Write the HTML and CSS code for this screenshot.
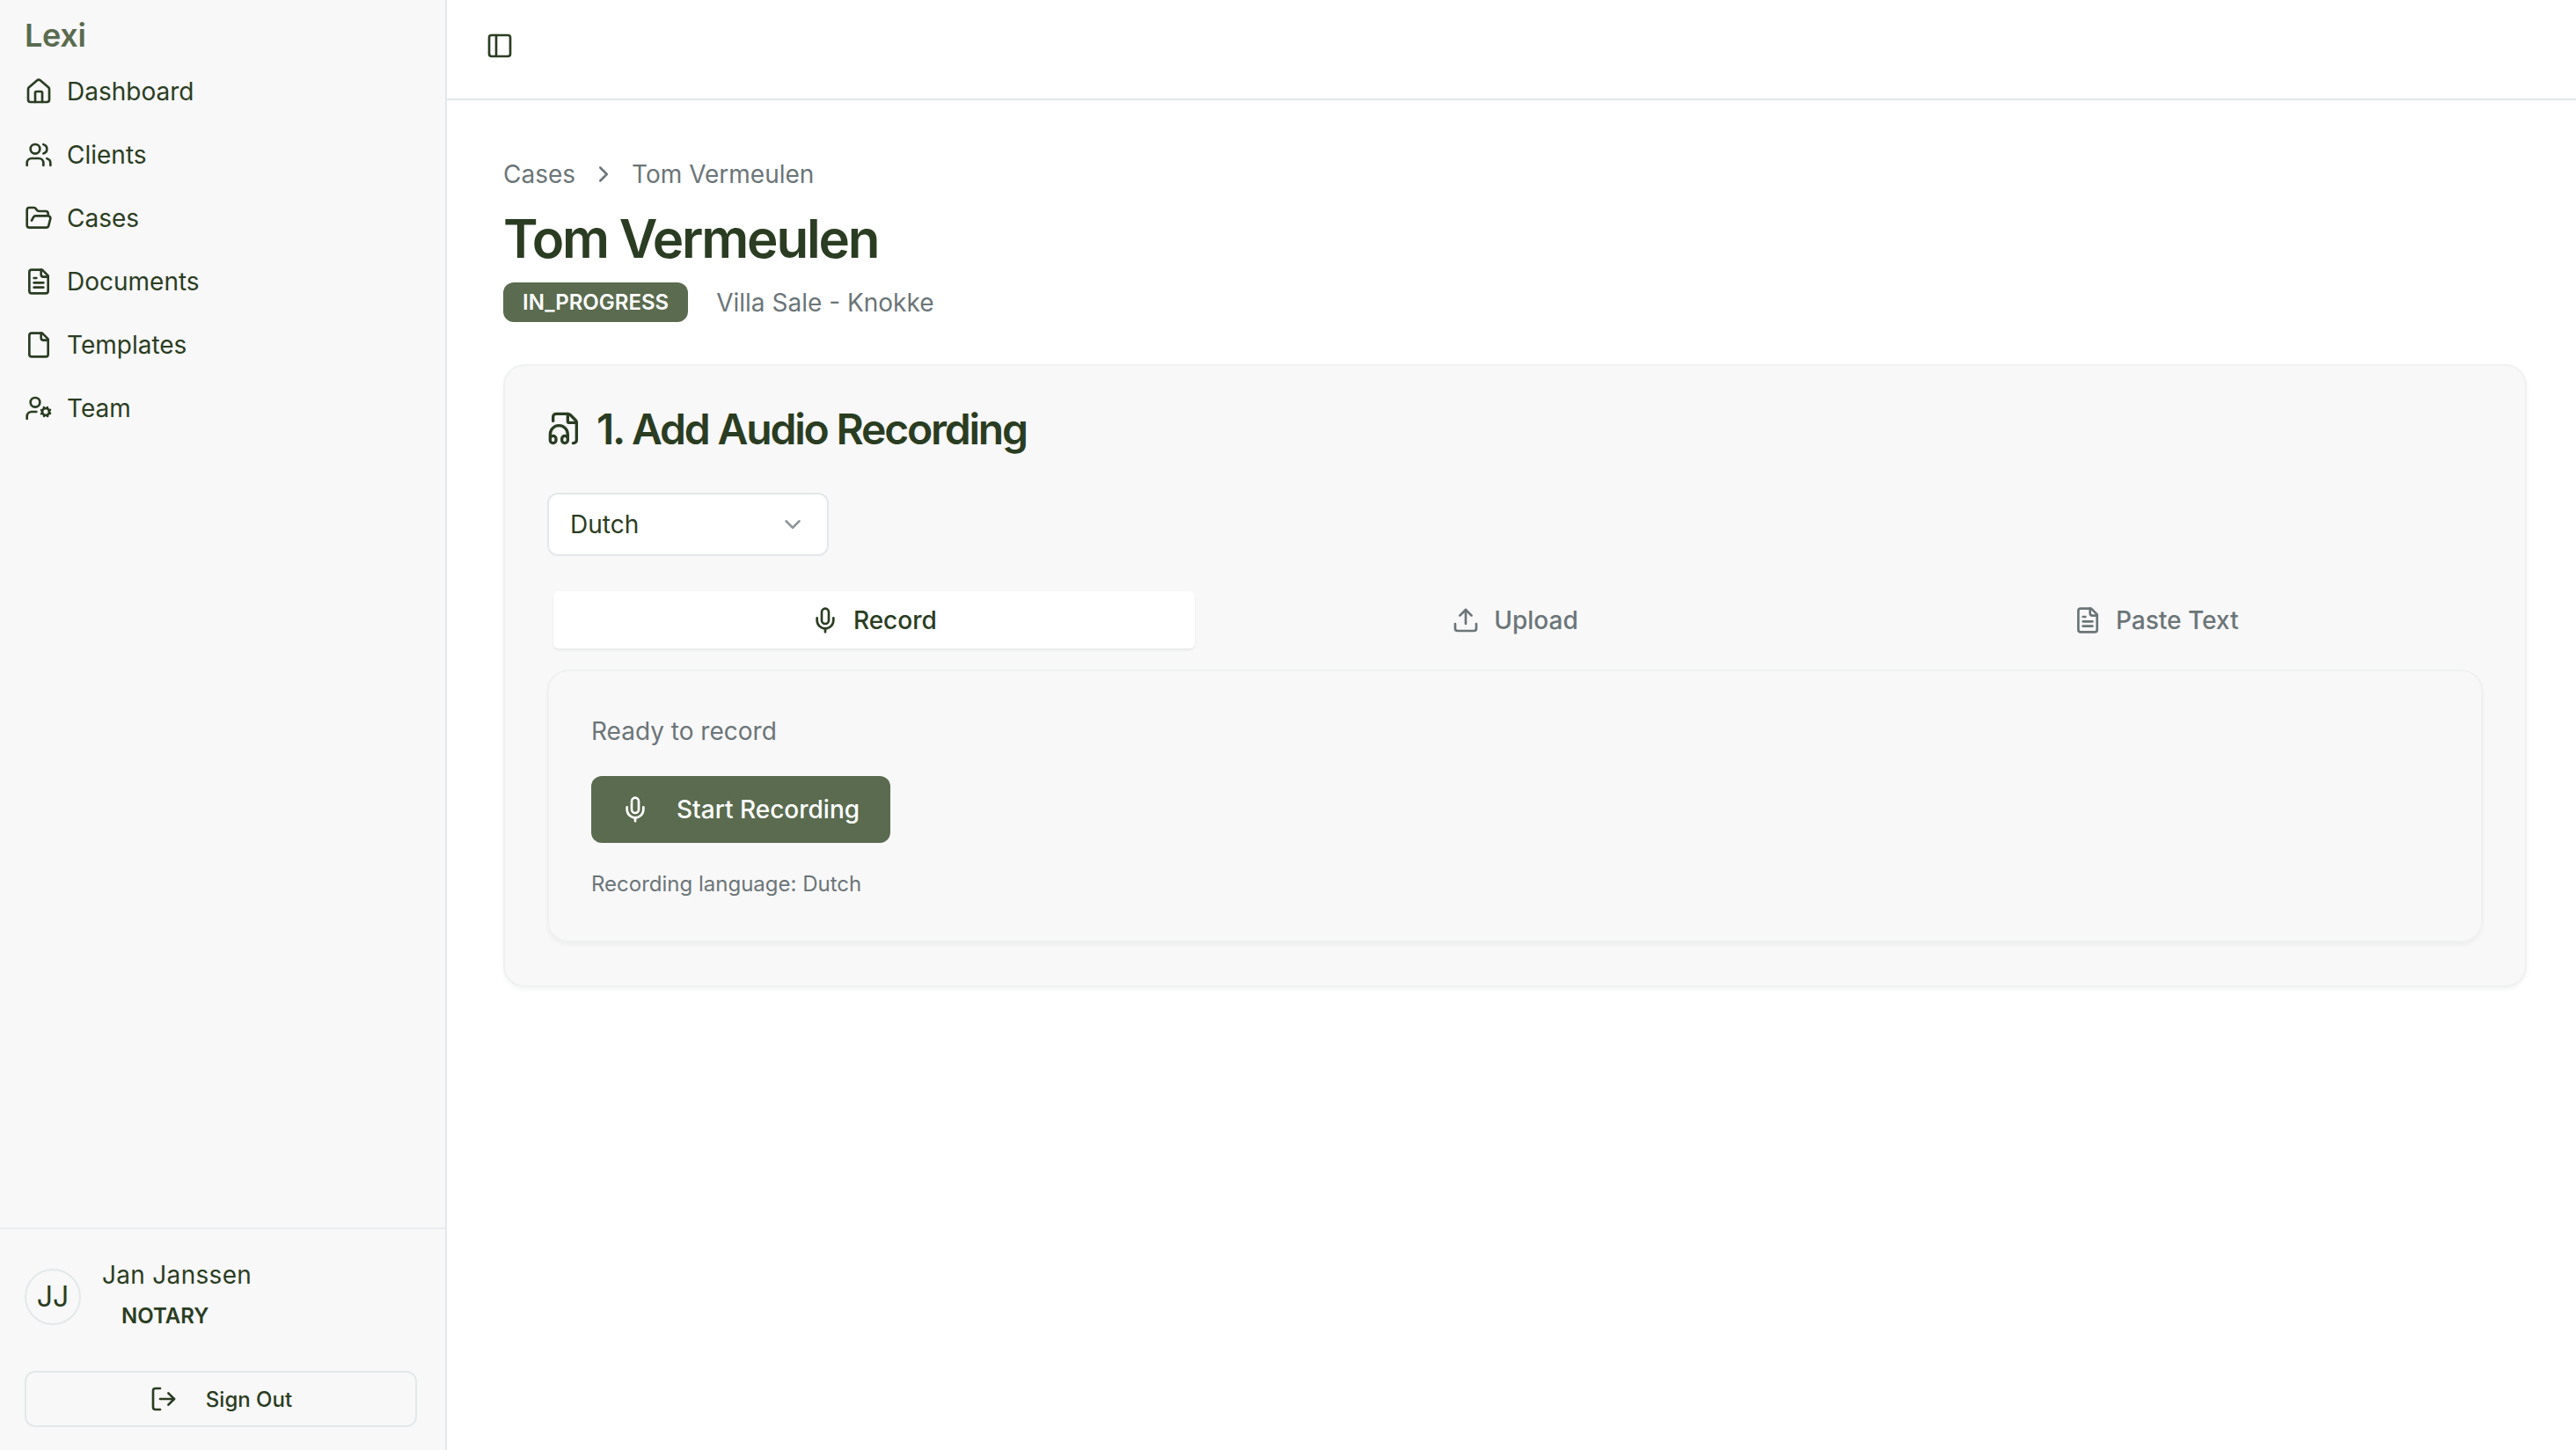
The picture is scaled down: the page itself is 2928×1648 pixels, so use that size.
FILE: index.html
```html
<!DOCTYPE html>
<html>
<head>
	<title>Lexi</title>
	<link rel="stylesheet" href="styles.css">
</head>
<body>
	<div class="app">
		<aside class="sidebar">
			<div class="brand">Lexi</div>
			<nav class="nav">
				<a class="nav-item"><svg class="icon" viewBox="0 0 24 24"><path d="M15 21v-8a1 1 0 0 0-1-1h-4a1 1 0 0 0-1 1v8"/><path d="M3 10a2 2 0 0 1 .709-1.528l7-5.999a2 2 0 0 1 2.582 0l7 5.999A2 2 0 0 1 21 10v9a2 2 0 0 1-2 2H5a2 2 0 0 1-2-2z"/></svg>Dashboard</a>
				<a class="nav-item"><svg class="icon" viewBox="0 0 24 24"><path d="M16 21v-2a4 4 0 0 0-4-4H6a4 4 0 0 0-4 4v2"/><circle cx="9" cy="7" r="4"/><path d="M22 21v-2a4 4 0 0 0-3-3.87"/><path d="M16 3.13a4 4 0 0 1 0 7.75"/></svg>Clients</a>
				<a class="nav-item"><svg class="icon" viewBox="0 0 24 24"><path d="m6 14 1.5-2.9A2 2 0 0 1 9.24 10H20a2 2 0 0 1 1.94 2.5l-1.54 6a2 2 0 0 1-1.95 1.5H4a2 2 0 0 1-2-2V5a2 2 0 0 1 2-2h3.9a2 2 0 0 1 1.69.9l.81 1.2a2 2 0 0 0 1.67.9H18a2 2 0 0 1 2 2v2"/></svg>Cases</a>
				<a class="nav-item"><svg class="icon" viewBox="0 0 24 24"><path d="M15 2H6a2 2 0 0 0-2 2v16a2 2 0 0 0 2 2h12a2 2 0 0 0 2-2V7Z"/><path d="M14 2v4a2 2 0 0 0 2 2h4"/><path d="M10 9H8"/><path d="M16 13H8"/><path d="M16 17H8"/></svg>Documents</a>
				<a class="nav-item"><svg class="icon" viewBox="0 0 24 24"><path d="M15 2H6a2 2 0 0 0-2 2v16a2 2 0 0 0 2 2h12a2 2 0 0 0 2-2V7Z"/><path d="M14 2v4a2 2 0 0 0 2 2h4"/></svg>Templates</a>
				<a class="nav-item"><svg class="icon" viewBox="0 0 24 24"><circle cx="18" cy="15" r="3"/><circle cx="9" cy="7" r="4"/><path d="M10 15H6a4 4 0 0 0-4 4v2"/><path d="m21.7 16.4-.9-.3"/><path d="m15.2 13.9-.9-.3"/><path d="m16.6 18.7.3-.9"/><path d="m19.1 12.2.3-.9"/><path d="m19.6 18.7-.4-1"/><path d="m16.8 12.3-.4-1"/><path d="m14.3 16.6 1-.4"/><path d="m20.7 13.8 1-.4"/></svg>Team</a>
			</nav>
			<div class="sidebar-footer">
				<div class="user">
					<div class="avatar">JJ</div>
					<div class="user-info">
						<div class="user-name">Jan Janssen</div>
						<div class="user-role">NOTARY</div>
					</div>
				</div>
				<button class="sign-out"><svg class="icon" viewBox="0 0 24 24"><path d="M9 21H5a2 2 0 0 1-2-2V5a2 2 0 0 1 2-2h4"/><polyline points="16 17 21 12 16 7"/><line x1="21" x2="9" y1="12" y2="12"/></svg>Sign Out</button>
			</div>
		</aside>
		<main class="main">
			<header class="topbar">
				<svg class="icon" viewBox="0 0 24 24"><rect width="18" height="18" x="3" y="3" rx="2"/><path d="M9 3v18"/></svg>
			</header>
			<div class="content">
				<div class="breadcrumb">
					<span>Cases</span>
					<svg class="icon" viewBox="0 0 24 24"><path d="m9 18 6-6-6-6"/></svg>
					<span>Tom Vermeulen</span>
				</div>
				<h1 class="title">Tom Vermeulen</h1>
				<div class="meta">
					<span class="badge">IN_PROGRESS</span>
					<span class="meta-text">Villa Sale - Knokke</span>
				</div>
				<section class="card">
					<h2 class="card-title"><svg class="icon" viewBox="0 0 24 24"><path d="M4 6.835V4a2 2 0 0 1 2-2h8a2.4 2.4 0 0 1 1.706.706l3.588 3.588A2.4 2.4 0 0 1 20 8v12a2 2 0 0 1-2 2h-.343"/><path d="M14 2v5a1 1 0 0 0 1 1h5"/><path d="M2 19a2 2 0 0 1 4 0v1a2 2 0 0 1-4 0v-4a6 6 0 0 1 12 0v4a2 2 0 0 1-4 0v-1a2 2 0 0 1 4 0"/></svg>1. Add Audio Recording</h2>
					<div class="select">
						<span>Dutch</span>
						<svg class="icon" viewBox="0 0 24 24"><path d="m6 9 6 6 6-6"/></svg>
					</div>
					<div class="tabs">
						<div class="tab active"><svg class="icon" viewBox="0 0 24 24"><path d="M12 2a3 3 0 0 0-3 3v7a3 3 0 0 0 6 0V5a3 3 0 0 0-3-3Z"/><path d="M19 10v2a7 7 0 0 1-14 0v-2"/><line x1="12" x2="12" y1="19" y2="22"/></svg>Record</div>
						<div class="tab"><svg class="icon" viewBox="0 0 24 24"><path d="M21 15v4a2 2 0 0 1-2 2H5a2 2 0 0 1-2-2v-4"/><polyline points="17 8 12 3 7 8"/><line x1="12" x2="12" y1="3" y2="15"/></svg>Upload</div>
						<div class="tab"><svg class="icon" viewBox="0 0 24 24"><path d="M15 2H6a2 2 0 0 0-2 2v16a2 2 0 0 0 2 2h12a2 2 0 0 0 2-2V7Z"/><path d="M14 2v4a2 2 0 0 0 2 2h4"/><path d="M10 9H8"/><path d="M16 13H8"/><path d="M16 17H8"/></svg>Paste Text</div>
					</div>
					<div class="panel">
						<div class="status">Ready to record</div>
						<button class="record-btn"><svg class="icon" viewBox="0 0 24 24"><path d="M12 2a3 3 0 0 0-3 3v7a3 3 0 0 0 6 0V5a3 3 0 0 0-3-3Z"/><path d="M19 10v2a7 7 0 0 1-14 0v-2"/><line x1="12" x2="12" y1="19" y2="22"/></svg>Start Recording</button>
						<div class="hint">Recording language: Dutch</div>
					</div>
				</section>
			</div>
		</main>
	</div>
</body>
</html>
```
FILE: styles.css
```css
* {
	box-sizing: border-box;
}
body {
	margin: 0;
	font-family: 'Inter', sans-serif;
	color: #2a3d22;
	background: #fff;
}
.icon {
	width: 32px;
	height: 32px;
	flex: none;
	fill: none;
	stroke: currentColor;
	stroke-width: 2;
	stroke-linecap: round;
	stroke-linejoin: round;
}
.app {
	display: flex;
	height: 100vh;
	overflow: hidden;
}

/* sidebar */
.sidebar {
	width: 508px;
	flex: none;
	display: flex;
	flex-direction: column;
	background: #f8f8f8;
	border-right: 2px solid #e3e8ea;
}
.brand {
	padding: 20px 28px 0;
	height: 68px;
	line-height: 40px;
	font-size: 36px;
	font-weight: 600;
	letter-spacing: -0.3px;
	color: #5a6b4f;
}
.nav-item {
	display: flex;
	align-items: center;
	gap: 16px;
	height: 72px;
	padding-left: 28px;
	font-size: 28px;
}
.sidebar-footer {
	margin-top: auto;
	height: 253px;
	padding: 0 28px;
	border-top: 2px solid #e9edee;
}
.user {
	display: flex;
	align-items: center;
	gap: 24px;
	height: 153px;
}
.avatar {
	width: 64px;
	height: 64px;
	display: flex;
	align-items: center;
	justify-content: center;
	border: 2px solid #e3e8ea;
	border-radius: 50%;
	font-size: 32px;
}
.user-info {
	margin-bottom: 6px;
}
.user-name {
	font-size: 28px;
	line-height: 40px;
	letter-spacing: 0.3px;
}
.user-role {
	margin: 10px 0 0 22px;
	font-size: 24px;
	line-height: 34px;
	font-weight: 600;
}
.sign-out {
	width: 446px;
	height: 64px;
	margin-top: 8px;
	display: flex;
	align-items: center;
	justify-content: center;
	gap: 32px;
	background: transparent;
	border: 2px solid #e3e8ea;
	border-radius: 12px;
	font-family: inherit;
	font-size: 24px;
	font-weight: 500;
	color: #2a3d22;
}

/* main */
.main {
	flex: 1;
	min-width: 0;
}
.topbar {
	height: 114px;
	display: flex;
	align-items: center;
	padding: 0 0 8px 44px;
	border-bottom: 2px solid #e3e8ea;
}
.content {
	padding: 64px 56px 0 64px;
}
.breadcrumb {
	display: flex;
	align-items: center;
	gap: 17px;
	height: 40px;
	font-size: 28px;
	color: #6b7578;
}
.breadcrumb .icon {
	width: 30px;
	height: 30px;
}
.title {
	margin: 17px 0 0;
	font-size: 60px;
	line-height: 72px;
	font-weight: 600;
	letter-spacing: -2.2px;
}
.meta {
	display: flex;
	align-items: center;
	gap: 32px;
	margin-top: 14px;
}
.badge {
	height: 45px;
	display: flex;
	align-items: center;
	padding: 0 22px;
	border-radius: 12px;
	background: #5a6b4f;
	color: #fff;
	font-size: 24px;
	font-weight: 600;
}
.meta-text {
	font-size: 28px;
	color: #6b7578;
}
.card {
	margin-top: 48px;
	padding: 41px 48px 48px;
	height: 708px;
	background: #f8f8f8;
	border: 2px solid #eff1f1;
	border-radius: 24px;
	box-shadow: 0 3px 4px rgba(30, 50, 40, 0.05);
}
.card-title {
	display: flex;
	align-items: center;
	gap: 16px;
	margin: 0;
	height: 60px;
	font-size: 48px;
	font-weight: 600;
	letter-spacing: -2.2px;
}
.card-title .icon {
	width: 40px;
	height: 40px;
}
.select {
	width: 320px;
	height: 72px;
	margin-top: 43px;
	display: flex;
	align-items: center;
	justify-content: space-between;
	padding: 0 24px;
	background: #fff;
	border: 2px solid #e3e8ea;
	border-radius: 12px;
	font-size: 28px;
}
.select .icon {
	width: 30px;
	height: 30px;
	color: #8d9698;
}
.tabs {
	display: flex;
	margin-top: 33px;
	padding: 7px;
}
.tab {
	flex: 1;
	height: 65px;
	display: flex;
	align-items: center;
	justify-content: center;
	gap: 16px;
	border-radius: 6px;
	font-size: 28px;
	font-weight: 500;
	color: #6b7578;
}
.tab.active {
	background: #fff;
	color: #2a3d22;
	box-shadow: 0 2px 3px rgba(30, 50, 40, 0.08);
}
.panel {
	margin-top: 17px;
	height: 310px;
	padding: 48px 48px 0;
	border: 2px solid #eff1f1;
	border-radius: 24px;
	box-shadow: 0 3px 4px rgba(30, 50, 40, 0.05);
}
.status {
	font-size: 28px;
	line-height: 40px;
	color: #6b7578;
}
.record-btn {
	margin-top: 31px;
	height: 76px;
	width: 340px;
	display: flex;
	align-items: center;
	gap: 31px;
	padding: 0 0 0 34px;
	border: 0;
	border-radius: 12px;
	background: #5a6b4f;
	color: #fff;
	font-family: inherit;
	font-size: 28px;
	font-weight: 500;
	white-space: nowrap;
}
.hint {
	margin-top: 30px;
	font-size: 24px;
	line-height: 34px;
	color: #6b7578;
}
```
